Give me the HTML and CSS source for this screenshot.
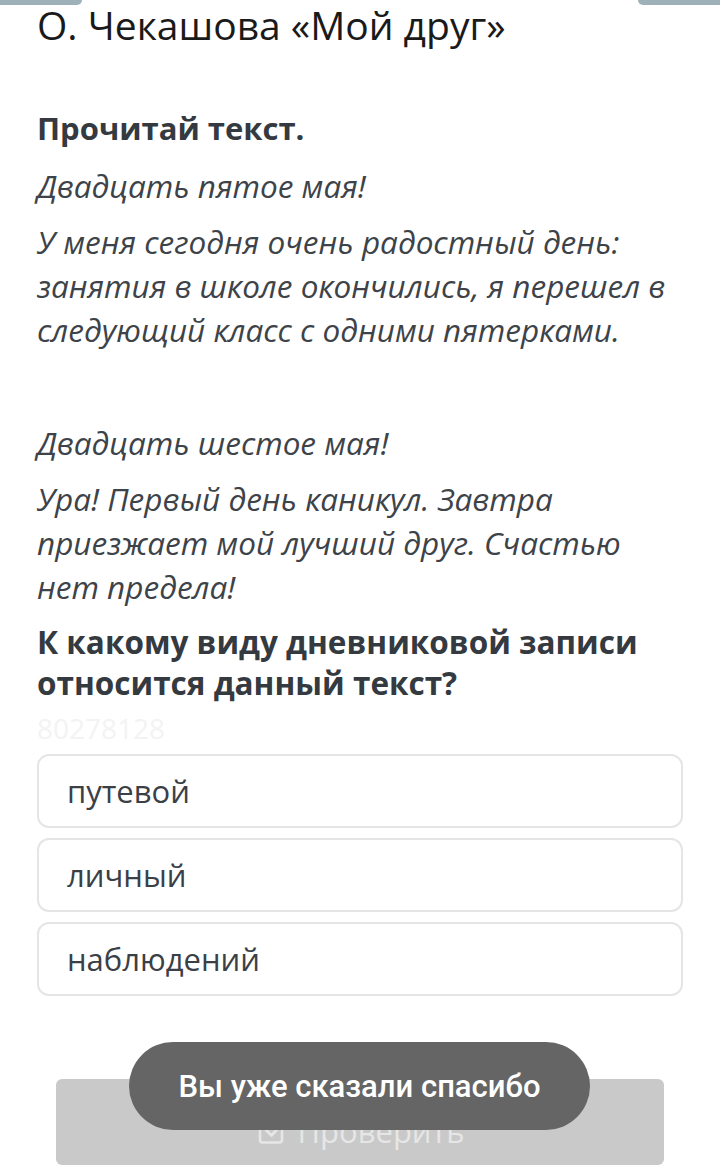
FILE: index.html
```html
<!DOCTYPE html>
<html lang="ru">
<head>
<meta charset="utf-8">
<link rel="stylesheet" href="styles.css">
</head>
<body>
<div class="topbars"><span class="tab tab-left"></span><span class="tab tab-right"></span></div>
<main class="page">
  <h1 class="title">О. Чекашова «Мой друг»</h1>
  <h2 class="task">Прочитай текст.</h2>
  <div class="story">
    <p class="first">Двадцать пятое мая!</p>
    <p>У меня сегодня очень радостный день: занятия в школе окончились, я перешел в следующий класс с одними пятерками.</p>
    <p class="gap">Двадцать шестое мая!</p>
    <p>Ура! Первый день каникул. Завтра приезжает мой лучший друг. Счастью нет предела!</p>
  </div>
  <h2 class="question">К какому виду дневниковой записи относится данный текст?</h2>
  <div class="watermark">80278128</div>
  <ul class="options">
    <li class="option">путевой</li>
    <li class="option">личный</li>
    <li class="option">наблюдений</li>
  </ul>
  <div class="actions">
    <button class="check-btn" type="button">
      <svg class="check-icon" viewBox="0 0 32 32" width="32" height="32" aria-hidden="true">
        <path d="M26 16v9a2.5 2.5 0 0 1-2.5 2.5h-17A2.5 2.5 0 0 1 4 25V9a2.5 2.5 0 0 1 2.5-2.5H17" fill="none" stroke="currentColor" stroke-width="2.6" stroke-linecap="round"/>
        <path d="M10 15l5.5 5.5L29.5 5" fill="none" stroke="currentColor" stroke-width="2.8" stroke-linecap="round" stroke-linejoin="round"/>
      </svg>
      <span>Проверить</span>
    </button>
    <div class="toast">Вы уже сказали спасибо</div>
  </div>
</main>
</body>
</html>
```
FILE: styles.css
```css
html, body {
  margin: 0;
  padding: 0;
  background: #ffffff;
}
body {
  font-family: "Open Sans", "Noto Sans", sans-serif;
  color: #3a4046;
  width: 720px;
  height: 1170px;
  overflow: hidden;
  position: relative;
}
.topbars {
  position: absolute;
  top: 0;
  left: 0;
  right: 0;
  display: flex;
  justify-content: space-between;
}
.tab {
  display: block;
  height: 5px;
  background: #9eb0b8;
}
.tab-left {
  width: 82px;
  border-bottom-right-radius: 6px;
}
.tab-right {
  width: 82px;
  border-bottom-left-radius: 6px;
}
.page {
  padding: 0 37px;
}
.title {
  margin: 0;
  font-weight: 400;
  font-size: 39px;
  line-height: 50px;
  color: #1a1a1a;
}
.task {
  margin: 57px 0 0;
  font-weight: 700;
  font-size: 31px;
  line-height: 43px;
  color: #343a40;
}
.story p {
  margin: 12px 0 0;
  font-style: italic;
  font-size: 31.5px;
  line-height: 44px;
  color: #3d4348;
}
.story p.first {
  margin-top: 14px;
}
.story p.gap {
  margin-top: 69px;
}
.question {
  margin: 12px 0 0;
  font-weight: 700;
  font-size: 31.5px;
  line-height: 41px;
  color: #343a40;
}
.watermark {
  font-size: 28px;
  line-height: 51px;
  color: #f3f3f3;
}
.options {
  list-style: none;
  margin: 0;
  padding: 0;
  display: flex;
  flex-direction: column;
  gap: 10px;
}
.option {
  box-sizing: border-box;
  height: 74px;
  border: 2px solid #e3e5e6;
  border-radius: 12px;
  padding: 0 28px;
  display: flex;
  align-items: center;
  font-size: 31px;
  color: #3a4046;
}
.actions {
  position: relative;
  margin-top: 83px;
  padding: 0 19px;
}
.check-btn {
  width: 100%;
  height: 86px;
  border: 0;
  border-radius: 6px;
  background: #c9c9c9;
  color: #e6e6e6;
  font-family: "Open Sans", sans-serif;
  font-size: 31px;
  display: flex;
  align-items: center;
  justify-content: center;
  gap: 10px;
  padding-top: 18px;
}
.check-icon {
  width: 32px;
  height: 32px;
}
.toast {
  position: absolute;
  left: 92px;
  top: -37px;
  width: 461px;
  height: 88px;
  border-radius: 44px;
  background: #656565;
  color: #ffffff;
  font-family: Roboto, "Liberation Sans", sans-serif;
  font-weight: 500;
  font-size: 31px;
  display: flex;
  align-items: center;
  justify-content: center;
}
```
